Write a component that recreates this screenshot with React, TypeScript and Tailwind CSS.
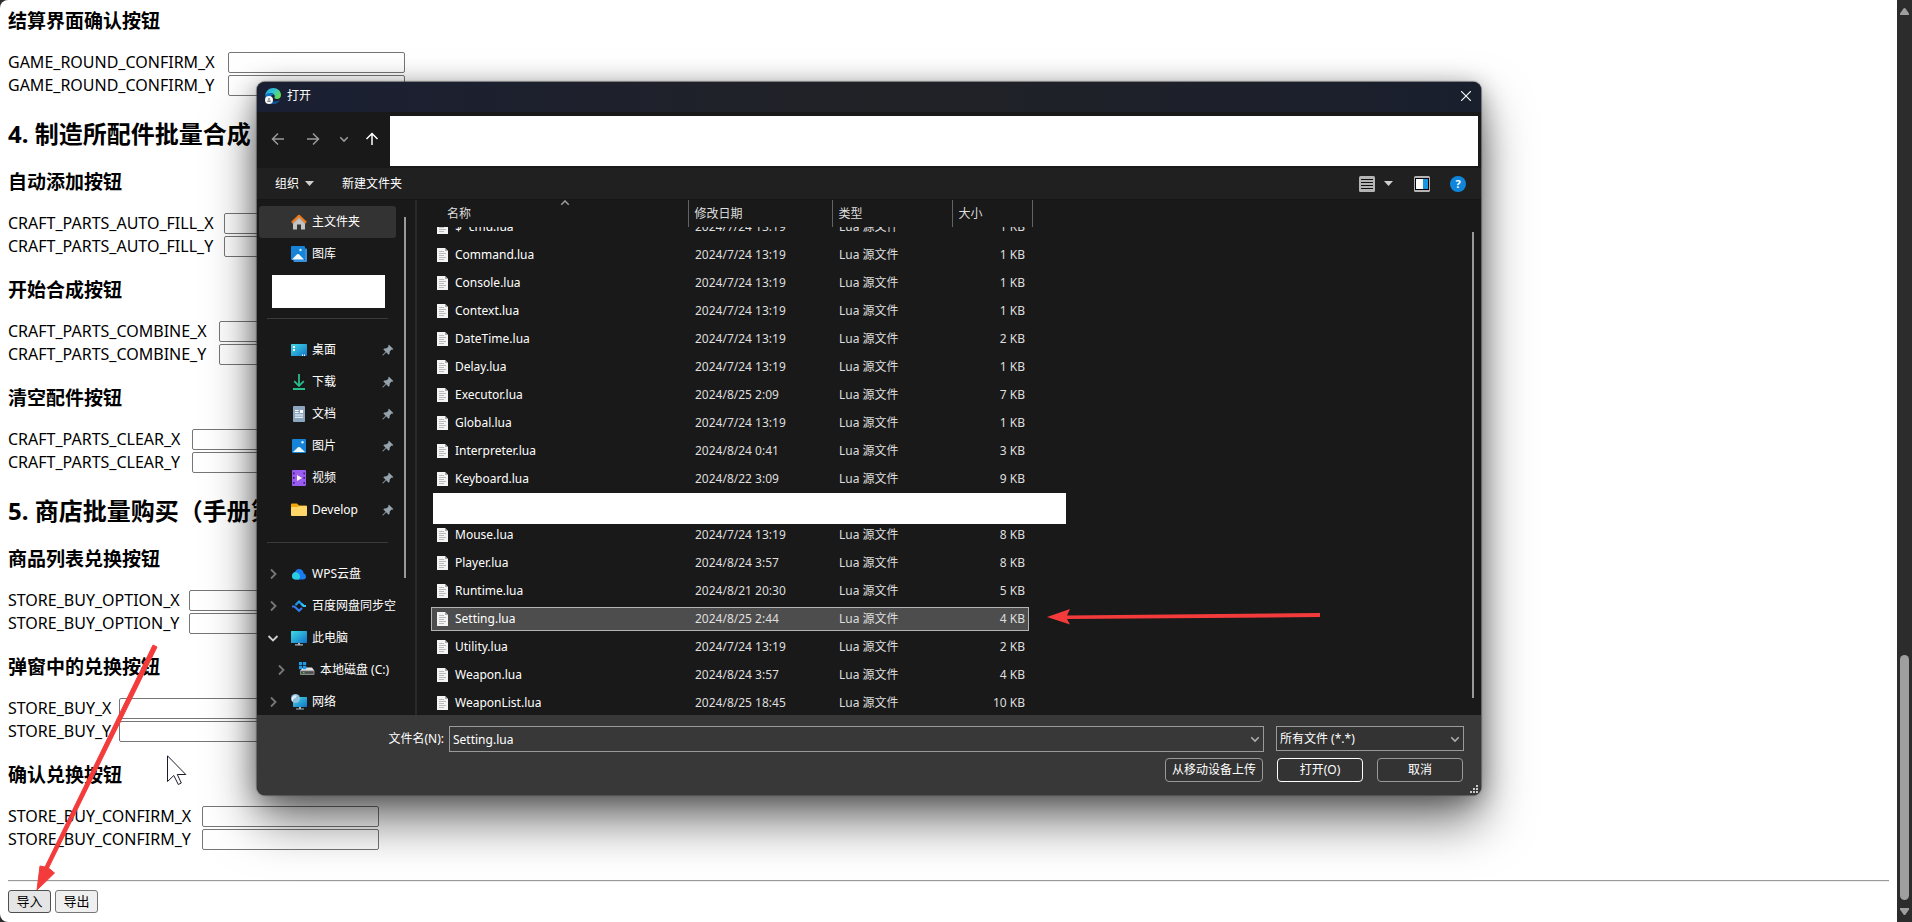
import type { ReactNode } from "react";

type FieldGroup = { title: string; name: string; labelWidth: string };
type Section = { heading?: string; groups: FieldGroup[] };

const sections: Section[] = [
  {
    groups: [{ title: "结算界面确认按钮", name: "GAME_ROUND_CONFIRM", labelWidth: "w-[220px]" }],
  },
  {
    heading: "4. 制造所配件批量合成",
    groups: [
      { title: "自动添加按钮", name: "CRAFT_PARTS_AUTO_FILL", labelWidth: "w-[216px]" },
      { title: "开始合成按钮", name: "CRAFT_PARTS_COMBINE", labelWidth: "w-[211px]" },
      { title: "清空配件按钮", name: "CRAFT_PARTS_CLEAR", labelWidth: "w-[184px]" },
    ],
  },
  {
    heading: "5. 商店批量购买（手册第",
    groups: [
      { title: "商品列表兑换按钮", name: "STORE_BUY_OPTION", labelWidth: "w-[181px]" },
      { title: "弹窗中的兑换按钮", name: "STORE_BUY", labelWidth: "w-[111px]" },
      { title: "确认兑换按钮", name: "STORE_BUY_CONFIRM", labelWidth: "w-[194px]" },
    ],
  },
];

type FileRow = { name: string; date: string; size: string };

const files: (FileRow | null)[] = [
  { name: "$~cmd.lua", date: "2024/7/24 13:19", size: "1 KB" },
  { name: "Command.lua", date: "2024/7/24 13:19", size: "1 KB" },
  { name: "Console.lua", date: "2024/7/24 13:19", size: "1 KB" },
  { name: "Context.lua", date: "2024/7/24 13:19", size: "1 KB" },
  { name: "DateTime.lua", date: "2024/7/24 13:19", size: "2 KB" },
  { name: "Delay.lua", date: "2024/7/24 13:19", size: "1 KB" },
  { name: "Executor.lua", date: "2024/8/25 2:09", size: "7 KB" },
  { name: "Global.lua", date: "2024/7/24 13:19", size: "1 KB" },
  { name: "Interpreter.lua", date: "2024/8/24 0:41", size: "3 KB" },
  { name: "Keyboard.lua", date: "2024/8/22 3:09", size: "9 KB" },
  null,
  { name: "Mouse.lua", date: "2024/7/24 13:19", size: "8 KB" },
  { name: "Player.lua", date: "2024/8/24 3:57", size: "8 KB" },
  { name: "Runtime.lua", date: "2024/8/21 20:30", size: "5 KB" },
  { name: "Setting.lua", date: "2024/8/25 2:44", size: "4 KB" },
  { name: "Utility.lua", date: "2024/7/24 13:19", size: "2 KB" },
  { name: "Weapon.lua", date: "2024/8/24 3:57", size: "4 KB" },
  { name: "WeaponList.lua", date: "2024/8/25 18:45", size: "10 KB" },
];

const selectedFile = "Setting.lua";

/* ---------- icons ---------- */

function Chevron({ dir, className = "" }: { dir: "right" | "down" | "up"; className?: string }) {
  const d =
    dir === "right" ? "M4 1.5L8.5 6L4 10.5" : dir === "down" ? "M1.5 4L6 8.5L10.5 4" : "M1.5 8L6 3.5L10.5 8";
  return (
    <svg viewBox="0 0 12 12" className={className} fill="none" stroke="currentColor" strokeWidth="1.8" aria-hidden="true">
      <path d={d} />
    </svg>
  );
}

function NavArrow({ d, className = "" }: { d: string; className?: string }) {
  return (
    <svg viewBox="0 0 14 14" className={`size-3.5 ${className}`} fill="none" stroke="currentColor" strokeWidth="1.5" aria-hidden="true">
      <path d={d} />
    </svg>
  );
}

function Triangle() {
  return (
    <svg viewBox="0 0 9 5" className="h-[5px] w-[9px]" aria-hidden="true">
      <path d="M0 0H9L4.5 5Z" fill="#cfcfcf" />
    </svg>
  );
}

function EdgeIcon() {
  return (
    <svg viewBox="0 0 16 16" className="size-4" aria-hidden="true">
      <defs>
        <linearGradient id="edgeTop" x1="0" y1="0" x2="1" y2="0.5">
          <stop offset="0" stopColor="#1d9fe0" />
          <stop offset="0.55" stopColor="#33c5cf" />
          <stop offset="1" stopColor="#63dc55" />
        </linearGradient>
      </defs>
      <path d="M0.3 8C0.3 3.5 3.8 0 8.2 0C12.6 0 16 3.200 16 7C16 9.400 14.300 11 12 11C10.200 11 9.200 10.300 9.400 9.600C10.300 8.300 9.600 5.600 6.800 5.200C3.500 4.900 1.200 6.500 0.300 8Z" fill="url(#edgeTop)" />
      <path d="M0.300 8C1 5.900 3.500 4.700 6 5.200C8 5.600 9 6.500 9.200 7.500C7.500 6.500 5.700 7.500 5.500 9.500C5.300 12 7.600 14 10.500 13.800C12.500 13.700 14 12.800 14.800 12C13.500 14.500 11 16 8.200 16C3.800 16 0.300 12.500 0.300 8Z" fill="#1272c4" />
      <path d="M5.500 9.500C5.300 12 7.600 14 10.500 13.800C12.500 13.700 14 12.800 14.800 12C13.500 14.500 11 16 8.200 16C6 15 4.500 11.500 5.500 9.500Z" fill="#0d4f91" />
      <circle cx="4" cy="12" r="4" fill="#f5f5f5" />
      <circle cx="4" cy="10.900" r="1" fill="#8a8f95" />
      <path d="M2 14L2.800 12.200H5.200L6 14Z" fill="#8a8f95" />
    </svg>
  );
}

function HomeIcon() {
  return (
    <svg viewBox="0 0 16 16" className="size-4" aria-hidden="true">
      <path d="M2 8L8 2.500L14 8V15.500H10V10.500H6V15.500H2Z" fill="#c4c4c4" />
      <path d="M8 2L14.500 8V10H13.600L8 5L2.400 10H1.500V8Z" fill="#9c9c9c" opacity="0.500" />
      <path d="M0.900 8.600L8 1.800L15.100 8.600" fill="none" stroke="#f07a1a" strokeWidth="2.200" strokeLinejoin="round" />
    </svg>
  );
}

function PictureIcon({ stacked = false }: { stacked?: boolean }) {
  return (
    <svg viewBox="0 0 16 16" className="size-4" aria-hidden="true">
      {stacked && <path d="M14 2.500H15.300Q16 2.500 16 3.200V15Q16 16 15 16H3.200Q2.500 16 2.500 15.300V14H14Z" fill="#3a8fd9" />}
      <rect x={stacked ? 0 : 1} y={stacked ? 0 : 1} width="14" height="14" rx="1" fill="#1583d8" />
      <path d={stacked ? "M1 13.500L6 8.300Q7 7.500 8 8.300L13 13.500Z" : "M2 14L7 9.300Q8 8.500 9 9.300L14 14Z"} fill="#eef8ff" />
      <circle cx={stacked ? 9.500 : 11.500} cy={stacked ? 4 : 4.300} r="1.200" fill="#d8f1ff" />
    </svg>
  );
}

function DesktopIcon() {
  return (
    <svg viewBox="0 0 16 16" className="size-4" aria-hidden="true">
      <defs>
        <linearGradient id="screen" x1="0" y1="0" x2="1" y2="1">
          <stop offset="0" stopColor="#3fdbe8" />
          <stop offset="1" stopColor="#1272c6" />
        </linearGradient>
      </defs>
      <rect y="2" width="16" height="12" rx="0.800" fill="url(#screen)" />
      <path d="M2 4H4V6H2ZM2 7H4V9H2ZM11 12.500H12V14H11ZM13 12.500H14V14H13Z" fill="#fff" />
    </svg>
  );
}

function DownloadIcon() {
  return (
    <svg viewBox="0 0 16 16" className="size-4" fill="none" stroke="#27bd8b" strokeWidth="1.800" aria-hidden="true">
      <path d="M8 0V11.500M3.200 7.200L8 12L12.800 7.200M2 15H14" />
    </svg>
  );
}

function DocumentIcon() {
  return (
    <svg viewBox="0 0 16 16" className="size-4" aria-hidden="true">
      <rect x="2" width="12" height="16" rx="1" fill="#8ca6c0" />
      <path d="M4 4H7.500V5H4ZM4 6H7.500V7H4ZM9 4H12V7H9ZM4 8.500H12V9.500H4ZM4 10.800H12V11.800H4Z" fill="#fff" />
    </svg>
  );
}

function VideoIcon() {
  return (
    <svg viewBox="0 0 16 16" className="size-4" aria-hidden="true">
      <rect x="1" width="14" height="16" rx="1" fill="#9b5cf0" />
      <path d="M2 2.500H3.600V4.200H2ZM2 7H3.600V8.700H2ZM2 12H3.600V13.700H2ZM12.400 2.500H14V4.200H12.400ZM12.400 7H14V8.700H12.400ZM12.400 12H14V13.700H12.400Z" fill="#3c1a78" />
      <path d="M6 5L11 8L6 11Z" fill="#fff" />
    </svg>
  );
}

function FolderIcon() {
  return (
    <svg viewBox="0 0 16 16" className="size-4" aria-hidden="true">
      <path d="M0 2.500Q0 1.500 1 1.500H6L8 3.500H15Q16 3.500 16 4.500V8H0Z" fill="#f0a80c" />
      <path d="M0 6Q0 5 1 5H6.500L8 4H15Q16 4 16 5V13Q16 14 15 14H1Q0 14 0 13Z" fill="#ffd768" />
    </svg>
  );
}

function CloudIcon() {
  return (
    <svg viewBox="0 0 16 16" className="size-4" aria-hidden="true">
      <path d="M5 13.500H12Q15 13.500 15 10.500Q15 8.200 12.700 7.500Q12 3.200 8 3Q5 3 4 6Q1 7 1 10Q1 13.500 5 13.500Z" fill="#1b7cf2" />
      <path d="M4.500 13.500Q1 13.300 1 10Q1 7 4 6Q7 5.800 8.500 8.500Q10 11 8 13.500Z" fill="#28cfe0" />
    </svg>
  );
}

function SyncIcon() {
  return (
    <svg viewBox="0 0 16 16" className="size-4" fill="none" strokeWidth="2.200" aria-hidden="true">
      <path d="M1 8.500H3.500L8 12.800L11 10" stroke="#2f7df5" />
      <path d="M15 8H12.500L8 3.500L4.500 7" stroke="#1c9cf0" />
      <path d="M10.500 6L12.800 8H15" stroke="#30c7f5" />
    </svg>
  );
}

function ComputerIcon() {
  return (
    <svg viewBox="0 0 16 16" className="size-4" aria-hidden="true">
      <rect y="1" width="16" height="12" rx="0.500" fill="url(#screen)" />
      <path d="M7 13H9V14.300H12V15.500H4V14.300H7Z" fill="#a9b7c0" />
    </svg>
  );
}

function DriveIcon() {
  return (
    <svg viewBox="0 0 16 16" className="size-4" aria-hidden="true">
      <path d="M4 5.500H13L15.500 9H1Z" fill="#e2e2e2" />
      <rect x="1" y="8.500" width="14.500" height="4.500" rx="1" fill="#8a8a8a" />
      <rect x="2" y="9.300" width="12.500" height="2.500" fill="#4c4c4c" />
      <path d="M4 10H5.500V11.200H4Z" fill="#43d04c" />
      <path d="M0 0H3.200V3.200H0ZM4 0H7.200V3.200H4ZM0 4H3.200V7.200H0ZM4 4H7.200V7.200H4Z" fill="#1b9cea" />
    </svg>
  );
}

function NetworkIcon() {
  return (
    <svg viewBox="0 0 16 16" className="size-4" aria-hidden="true">
      <rect x="2" y="3" width="14" height="10" fill="url(#screen)" />
      <path d="M8 13H10V14.500H13V15.500H5V14.500H8Z" fill="#a9b7c0" />
      <circle cx="4.500" cy="4.500" r="4.500" fill="#8fbfd9" />
      <path d="M1 3Q3.500 0.500 6 1.500Q5 4 3 4.500Q1.500 5.500 2 7.800Q0 6 1 3Z" fill="#dff1f8" />
    </svg>
  );
}

function PinIcon() {
  return (
    <svg viewBox="0 0 12 12" className="size-3" aria-hidden="true">
      <path d="M7 0.800L11.300 5L10.500 5.800L9.600 5.600L7.700 7.600L7.500 10L6.600 10.800L4.200 8.300L1 11.600L0.300 11L3.600 7.700L1.300 5.300L2.200 4.500L4.700 4.300L6.500 2.400L6.200 1.500Z" fill="#95a3ad" />
    </svg>
  );
}

function FileIcon() {
  return (
    <svg viewBox="0 0 11 14" className="h-3.5 w-[11px] shrink-0" aria-hidden="true">
      <path d="M0 0H8L11 3V14H0Z" fill="#f4f4f4" />
      <path d="M8 0V3H11Z" fill="#a8a8a8" />
      <path d="M2 3.500H7M2 5.500H9M2 7.500H7M2 9.500H9M2 11.500H7" stroke="#b4b4b4" strokeWidth="0.900" />
    </svg>
  );
}

/* ---------- settings page ---------- */

function CoordinateRow({ name, labelWidth }: { name: string; labelWidth: string }) {
  return (
    <div className="flex h-[23px] items-center">
      <label htmlFor={name} className={`whitespace-nowrap ${labelWidth}`}>
        {name}
      </label>
      <input id={name} type="text" className="h-[21px] w-[177px] rounded-[2px] border border-[#767676] bg-white px-0.5 text-[13px]" />
    </div>
  );
}

function SettingsPage() {
  return (
    <main className="min-w-0 flex-1 rounded-l-lg bg-white px-2 pt-[9px] pb-2 text-base leading-[23px] text-black">
      {sections.map((section, index) => (
        <section key={index}>
          {section.heading && (
            <h2 className="mt-[21px] mb-5 text-2xl leading-8 font-bold whitespace-nowrap">{section.heading}</h2>
          )}
          <div className="flex flex-col gap-5">
            {section.groups.map((group) => (
              <div key={group.name}>
                <h3 className="mb-[17px] text-[19px] leading-[25px] font-bold">{group.title}</h3>
                <CoordinateRow name={`${group.name}_X`} labelWidth={group.labelWidth} />
                <CoordinateRow name={`${group.name}_Y`} labelWidth={group.labelWidth} />
              </div>
            ))}
          </div>
        </section>
      ))}
      <hr className="mt-[29px] mb-2 border-t-1 border-b-1 border-t-[#9a9a9a] border-b-[#eeeeee]" />
      <div className="flex gap-1 text-[13px] leading-[21px]">
        <button type="button" className="w-[43px] rounded-[3px] border border-[#4f4f4f] bg-[#e5e5e5]">
          导入
        </button>
        <button type="button" className="w-[43px] rounded-[3px] border border-[#767676] bg-[#efefef]">
          导出
        </button>
      </div>
    </main>
  );
}

function PageScrollbar() {
  return (
    <div className="flex w-[15px] flex-col items-center bg-[#2c2c2c] pt-2 pb-[7px]" aria-hidden="true">
      <svg viewBox="0 0 9 7" className="h-[7px] w-[9px]">
        <path d="M3.500 0.500Q4.500 -0.500 5.500 0.500L9 5.500V7H0V5.500Z" fill="#9f9f9f" />
      </svg>
      <div className="grow-[639]" />
      <div className="w-[9px] grow-[245] rounded-full bg-[#9f9f9f]" />
      <svg viewBox="0 0 9 7" className="mt-2 h-[7px] w-[9px]">
        <path d="M0 0H9V1.500L5.500 6.500Q4.500 7.500 3.500 6.500L0 1.500Z" fill="#9f9f9f" />
      </svg>
    </div>
  );
}

/* ---------- open dialog ---------- */

type SideItemProps = {
  icon: ReactNode;
  label: string;
  active?: boolean;
  pinned?: boolean;
  expand?: "right" | "down";
  nested?: boolean;
};

function SideItem({ icon, label, active, pinned, expand, nested }: SideItemProps) {
  return (
    <li>
      <button
        type="button"
        className={`flex h-8 w-[137px] items-center overflow-hidden rounded-[3px] text-left whitespace-nowrap ${
          nested ? "pl-4" : "pl-2"
        } ${active ? "bg-[#333333]" : ""}`}
      >
        <span className="mr-3 size-3 shrink-0">
          {expand && <Chevron dir={expand} className={`size-3 ${expand === "down" ? "text-[#d0d0d0]" : "text-[#777777]"}`} />}
        </span>
        <span className="mr-[5px] shrink-0">{icon}</span>
        <span className="min-w-0 flex-1">{label}</span>
        {pinned && (
          <span className="mr-0.5">
            <PinIcon />
          </span>
        )}
      </button>
    </li>
  );
}

function SideSeparator() {
  return (
    <li className="flex h-8 w-[129px] items-center pl-2" aria-hidden="true">
      <div className="h-px w-full bg-[#3a3a3a]" />
    </li>
  );
}

function Sidebar() {
  return (
    <nav aria-label="位置" className="flex h-full w-40 shrink-0 border-r-2 border-[#2a2a2a] pl-0.5">
      <ul className="h-full w-36 shrink-0 overflow-hidden pt-1.5">
        <SideItem icon={<HomeIcon />} label="主文件夹" active />
        <SideItem icon={<PictureIcon stacked />} label="图库" />
        <li className="relative h-8">
          <div className="absolute top-[5px] left-[13px] h-[33px] w-[113px] bg-white" />
        </li>
        <SideSeparator />
        <SideItem icon={<DesktopIcon />} label="桌面" pinned />
        <SideItem icon={<DownloadIcon />} label="下载" pinned />
        <SideItem icon={<DocumentIcon />} label="文档" pinned />
        <SideItem icon={<PictureIcon />} label="图片" pinned />
        <SideItem icon={<VideoIcon />} label="视频" pinned />
        <SideItem icon={<FolderIcon />} label="Develop" pinned />
        <SideSeparator />
        <SideItem icon={<CloudIcon />} label="WPS云盘" expand="right" />
        <SideItem icon={<SyncIcon />} label="百度网盘同步空" expand="right" />
        <SideItem icon={<ComputerIcon />} label="此电脑" expand="down" />
        <SideItem icon={<DriveIcon />} label="本地磁盘 (C:)" expand="right" nested />
        <SideItem icon={<NetworkIcon />} label="网络" expand="right" />
      </ul>
      <div className="mt-[17px] mb-[137px] ml-px w-0.5 bg-[#999999]" />
    </nav>
  );
}

function Cell({ clipped, selected, className = "", children }: { clipped: boolean; selected: boolean; className?: string; children: ReactNode }) {
  return (
    <td className="p-0">
      <div className={`flex flex-col justify-end overflow-hidden pb-0.5 ${clipped ? "h-3.5" : "h-7"}`}>
        <div
          className={`flex h-6 shrink-0 items-center whitespace-nowrap ${
            selected ? "border-y border-[#b4b4b4] bg-[#4d4d4d]" : "border-y border-transparent"
          } ${className}`}
        >
          {children}
        </div>
      </div>
    </td>
  );
}

function FileTable() {
  return (
    <table className="w-[601px] table-fixed border-collapse">
      <thead>
        <tr className="h-[27px] text-left text-[#dedede]">
          <th className="relative w-[257px] border-r border-[#636363] p-0 pl-4 font-normal">
            名称
            <span className="absolute -top-0.5 left-[129px]">
              <Chevron dir="up" className="size-2.5 text-[#9a9a9a]" />
            </span>
          </th>
          <th className="w-36 border-r border-[#636363] p-0 pl-1.5 font-normal">修改日期</th>
          <th className="w-[120px] border-r border-[#636363] p-0 pl-1.5 font-normal">类型</th>
          <th className="w-20 border-r border-[#636363] p-0 pl-1.5 font-normal">大小</th>
        </tr>
      </thead>
      <tbody>
        {files.map((file, index) => {
          if (!file) {
            return (
              <tr key="covered">
                <td colSpan={4} className="relative h-7 p-0">
                  <div className="absolute top-0 left-0.5 h-[31px] w-[633px] bg-white" />
                </td>
              </tr>
            );
          }
          const selected = file.name === selectedFile;
          const clipped = index === 0;
          return (
            <tr key={file.name} aria-selected={selected} className="text-[#dedede]">
              <Cell clipped={clipped} selected={selected} className={`gap-[7px] text-white ${selected ? "border-l pl-[5px]" : "pl-1.5"}`}>
                <FileIcon />
                {file.name}
              </Cell>
              <Cell clipped={clipped} selected={selected} className="pl-[7px]">
                {file.date}
              </Cell>
              <Cell clipped={clipped} selected={selected} className="pl-[7px]">
                Lua 源文件
              </Cell>
              <Cell clipped={clipped} selected={selected} className={`mr-[3px] justify-end ${selected ? "border-r pr-[3px]" : "pr-1"}`}>
                {file.size}
              </Cell>
            </tr>
          );
        })}
      </tbody>
    </table>
  );
}

function OpenDialog() {
  return (
    <div
      role="dialog"
      aria-label="打开"
      className="absolute top-[82px] right-[431px] left-[257px] overflow-hidden rounded-lg bg-[#191919] text-xs text-white shadow-[0_0_1px_1px_rgba(60,60,60,0.6),0_4px_24px_rgba(0,0,0,0.35),0_26px_50px_rgba(0,0,0,0.55)]"
    >
      <div className="flex h-[30px] items-center bg-linear-to-r from-[#1a1f33] via-[#212226] to-[#1a1f2e] pr-[9px] pb-0.5 pl-2">
        <EdgeIcon />
        <span className="ml-1.5 flex-1">打开</span>
        <button type="button" aria-label="关闭" className="p-px">
          <svg viewBox="0 0 10 10" className="size-2.5" fill="none" stroke="#ffffff" strokeWidth="1.100">
            <path d="M0 0L10 10M10 0L0 10" />
          </svg>
        </button>
      </div>

      <div className="flex h-14 items-start bg-[#191919] pt-1 pr-[3px] text-[#9b9b9b]">
        <div className="flex h-[46px] items-center">
          <button type="button" aria-label="后退" className="ml-3.5">
            <NavArrow d="M13 7H1.500M7 1.500L1.500 7L7 12.500" />
          </button>
          <button type="button" aria-label="前进" className="ml-[21px]">
            <NavArrow d="M1 7H12.500M7 1.500L12.500 7L7 12.500" />
          </button>
          <button type="button" aria-label="最近位置" className="ml-[19px]">
            <Chevron dir="down" className="size-2.5" />
          </button>
          <button type="button" aria-label="上一级" className="ml-4">
            <NavArrow d="M7 13V1.500M1.500 7L7 1.500L12.500 7" className="text-white" />
          </button>
        </div>
        <div className="ml-[11px] h-[50px] flex-1 bg-white" />
      </div>

      <div className="flex h-[31px] items-center bg-[#202020] pr-[15px] pl-[18px]">
        <button type="button" className="flex items-center gap-1.5">
          组织
          <Triangle />
        </button>
        <button type="button" className="ml-7">
          新建文件夹
        </button>
        <div className="flex-1" />
        <button type="button" aria-label="视图" className="flex items-center gap-[9px]">
          <svg viewBox="0 0 16 16" className="size-4">
            <rect width="16" height="16" rx="1.500" fill="#b4b4b4" />
            <path d="M2 3.500H14M2 6.500H14M2 9.500H14M2 12.500H14" stroke="#111" strokeWidth="1" />
          </svg>
          <Triangle />
        </button>
        <button type="button" aria-label="预览窗格" className="ml-[21px]">
          <svg viewBox="0 0 16 16" className="size-4">
            <rect width="16" height="16" rx="1.500" fill="#b4b4b4" />
            <rect x="1" y="2" width="14" height="12" fill="#050505" />
            <rect x="2" y="3" width="7" height="10" fill="#fff" />
            <rect x="9" y="3" width="5" height="10" fill="#1795e2" />
          </svg>
        </button>
        <button type="button" aria-label="帮助" className="ml-5 flex size-4 items-center justify-center rounded-full bg-[#0f86dc] text-[11px] leading-4 font-bold">
          ?
        </button>
      </div>

      <div className="flex h-[516px] overflow-hidden border-t border-[#161616]">
        <Sidebar />
        <div className="flex h-full min-w-0 flex-1 items-start justify-between pr-[7px] pl-3.5">
          <FileTable />
          <div className="mt-8 h-[466px] w-0.5 bg-[#999999]" />
        </div>
      </div>

      <form className="relative flex flex-col gap-1.5 bg-[#383838] pt-[11px] pr-[17px] pb-[13px]" onSubmit={(event) => event.preventDefault()}>
        <div className="flex h-[26px] items-start">
          <label htmlFor="file-name" className="w-48 pr-[5px] text-right leading-[26px]">
            文件名(N):
          </label>
          <div className="flex h-[26px] min-w-0 flex-1 items-center border border-[#9a9a9a] pr-[3px]">
            <input id="file-name" type="text" defaultValue="Setting.lua" className="h-full min-w-0 flex-1 bg-transparent pl-[3px] outline-none" />
            <button type="button" aria-label="展开文件名列表">
              <Chevron dir="down" className="size-2.5 text-[#b0b0b0]" />
            </button>
          </div>
          <div className="relative ml-3 w-[188px]">
            <select aria-label="文件类型" className="block h-[25px] w-full appearance-none border border-[#9a9a9a] bg-[#333333] pl-[3px] text-white">
              <option>所有文件 (*.*)</option>
            </select>
            <Chevron dir="down" className="pointer-events-none absolute top-2 right-1 size-2.5 text-[#b0b0b0]" />
          </div>
        </div>
        <div className="flex justify-end gap-3.5 pr-px">
          <button type="button" className="h-6 w-[98px] rounded border border-[#9a9a9a] bg-[#333333]">
            从移动设备上传
          </button>
          <button type="submit" className="h-6 w-[86px] rounded border border-white bg-[#333333]">
            打开(O)
          </button>
          <button type="button" className="h-6 w-[86px] rounded border border-[#9a9a9a] bg-[#333333]">
            取消
          </button>
        </div>
        <svg viewBox="0 0 8 8" className="absolute right-[3px] bottom-0.5 size-2" aria-hidden="true">
          <path d="M6 0H8V2H6ZM6 3H8V5H6ZM3 3H5V5H3ZM6 6H8V8H6ZM3 6H5V8H3ZM0 6H2V8H0Z" fill="#c8c8c8" />
        </svg>
      </form>
    </div>
  );
}

/* ---------- annotations ---------- */

function Annotations() {
  return (
    <>
      <svg viewBox="0 0 126 252" className="pointer-events-none absolute top-[642px] left-[34px] h-[252px] w-[126px]" aria-hidden="true">
        <path d="M119 3L123 5L14.500 226L20.500 231L3 248L6 224L11 225Z" fill="#f43b3b" stroke="#f43b3b" />
      </svg>
      <svg viewBox="0 0 276 20" className="pointer-events-none absolute top-[607px] left-[1046px] h-5 w-[276px]" aria-hidden="true">
        <path d="M1 10L24 2L21 8.500L274 6V10L21 12L24 17.500Z" fill="#f43b3b" />
      </svg>
      <svg viewBox="0 0 20 31" className="pointer-events-none absolute top-[755px] left-[167px] h-[31px] w-5" aria-hidden="true">
        <path d="M0.500 0.800V26.500L6.800 20.500L11.300 29.500L14.300 28L10.300 19.500H18.800Z" fill="#fff" stroke="#1c1c2a" strokeWidth="1" />
      </svg>
    </>
  );
}

export default function App() {
  return (
    <div className="relative flex min-h-screen overflow-hidden bg-[#2c2c2c] font-['Noto_Sans','Noto_Sans_CJK_SC',sans-serif]">
      <SettingsPage />
      <PageScrollbar />
      <OpenDialog />
      <Annotations />
    </div>
  );
}
